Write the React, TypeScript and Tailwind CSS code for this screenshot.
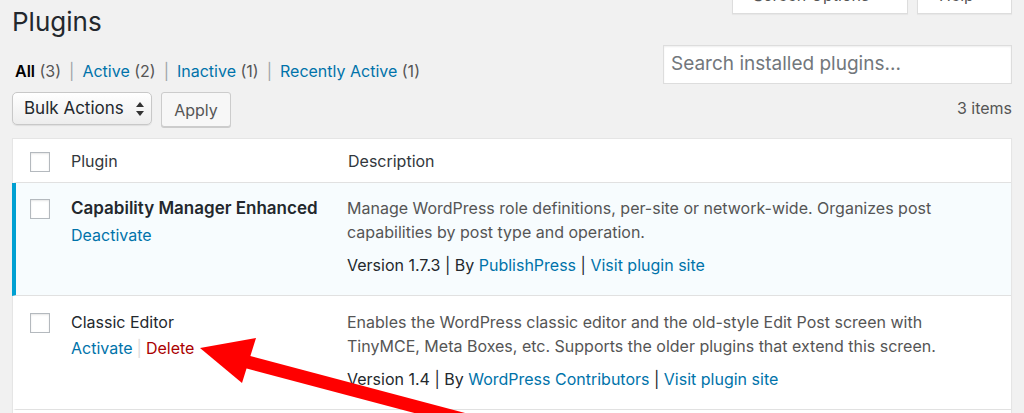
function Checkbox() {
  return (
    <span className="block h-[20px] w-[20px] border border-[#b4b9be] bg-white shadow-[inset_0_1px_2px_rgba(0,0,0,0.1)]" />
  );
}

function Sep() {
  return <span className="mx-[8px] text-[#a0a5aa]">|</span>;
}

function RedArrow() {
  // Hand-drawn style pointer aimed at the Delete action
  return (
    <svg
      className="pointer-events-none absolute left-0 top-0"
      width="1024"
      height="413"
      viewBox="0 0 1024 413"
    >
      <line x1="240" y1="360" x2="500" y2="429" stroke="#ff0000" strokeWidth="13" />
      <polygon points="200,348 256,338 242,383" fill="#ff0000" />
    </svg>
  );
}

export default function App() {
  return (
    <div className="relative h-[413px] w-[1024px] overflow-hidden bg-[#f1f1f1] font-['Inter',sans-serif] text-[#23282d]">
      <div className="px-[12px]">
        {/* heading + screen meta tabs */}
        <div className="flex items-start justify-between">
          <h1 className="mt-[4px] text-[26px] leading-[36px] font-normal text-[#23282d]">Plugins</h1>
          <div className="-mt-[26px] flex gap-[9px]">
            <div className="flex h-[40px] w-[176px] items-end border border-t-0 border-[#ddd] bg-white pb-[8px] pl-[20px] text-[16px] leading-[20px] text-[#555] shadow-[0_1px_1px_rgba(0,0,0,0.04)]">
              Screen Options
            </div>
            <div className="flex h-[40px] w-[95px] items-end border border-t-0 border-[#ddd] bg-white pb-[8px] pl-[21px] text-[16px] leading-[20px] text-[#555] shadow-[0_1px_1px_rgba(0,0,0,0.04)]">
              Help
            </div>
          </div>
        </div>

        {/* view filters + search */}
        <div className="mt-[5px] flex items-start justify-between">
          <ul className="ml-[3px] mt-[14px] flex text-[16px] leading-[24px] text-[#555]">
            <li>
              <span className="font-semibold text-black">All</span> (3)
            </li>
            <Sep />
            <li>
              <span className="text-[#0073aa]">Active</span> (2)
            </li>
            <Sep />
            <li>
              <span className="text-[#0073aa]">Inactive</span> (1)
            </li>
            <Sep />
            <li>
              <span className="text-[#0073aa]">Recently Active</span> (1)
            </li>
          </ul>
          <div className="flex h-[39px] w-[349px] items-center border border-[#ddd] bg-white pl-[7px] text-[19px] text-[#72777c] shadow-[inset_0_1px_2px_rgba(0,0,0,0.07)]">
            Search installed plugins...
          </div>
        </div>

        {/* bulk actions row */}
        <div className="mt-[8px] flex items-start justify-between">
          <div className="flex items-start gap-[9px]">
            <div className="flex h-[33px] w-[140px] items-center justify-between rounded-[5px] border border-[#c8c8c8] bg-gradient-to-b from-white to-[#ededed] pl-[11px] pr-[7px] text-[17px] text-[#23282d] shadow-[0_1px_1px_rgba(0,0,0,0.08)]">
              <span>Bulk Actions</span>
              <svg width="8" height="14" viewBox="0 0 8 14">
                <polygon points="4,0 8,5 0,5" fill="#333" />
                <polygon points="0,9 8,9 4,14" fill="#333" />
              </svg>
            </div>
            <div className="flex h-[35px] w-[70px] items-center justify-center rounded-[3px] border border-[#ccc] bg-[#f7f7f7] text-[16px] text-[#555] shadow-[0_1px_0_#ccc]">
              Apply
            </div>
          </div>
          <div className="mt-[5px] text-[16px] leading-[22px] text-[#555]">3 items</div>
        </div>

        {/* plugin table */}
        <div className="mt-[11px] border border-b-0 border-[#e5e5e5] bg-white shadow-[0_1px_1px_rgba(0,0,0,0.04)]">
          {/* header */}
          <div className="flex h-[44px] border-b border-l-[3px] border-b-[#e1e1e1] border-l-transparent text-[16px] leading-[24px] text-[#32373c]">
            <div className="w-[55px] pl-[14px] pt-[13px]">
              <Checkbox />
            </div>
            <div className="w-[276px] pt-[10px]">Plugin</div>
            <div className="flex-1 pt-[10px] pl-px">Description</div>
          </div>

          {/* active plugin */}
          <div className="-ml-px flex h-[113px] border-b border-l-4 border-b-[#e1e1e1] border-l-[#00a0d2] bg-[#f7fcfe] text-[16px] leading-[24px]">
            <div className="w-[55px] pl-[14px] pt-[16px]">
              <Checkbox />
            </div>
            <div className="w-[276px] pt-[13px]">
              <div className="text-[17px] font-semibold text-[#23282d]">Capability Manager Enhanced</div>
              <div className="mt-[3px] text-[#0073aa]">Deactivate</div>
            </div>
            <div className="flex-1 pt-[13px]">
              <p className="text-[#555]">
                <span className="block whitespace-nowrap">
                  Manage WordPress role definitions, per-site or network-wide. Organizes post
                </span>
                <span className="block whitespace-nowrap">capabilities by post type and operation.</span>
              </p>
              <p className="mt-[9px] text-[#23282d]">
                Version 1.7.3 | By <span className="text-[#0073aa]">PublishPress</span> |{" "}
                <span className="text-[#0073aa]">Visit plugin site</span>
              </p>
            </div>
          </div>

          {/* inactive plugin */}
          <div className="flex h-[114px] border-b border-l-[3px] border-b-[#e1e1e1] border-l-transparent text-[16px] leading-[24px]">
            <div className="w-[55px] pl-[14px] pt-[17px]">
              <Checkbox />
            </div>
            <div className="w-[276px] pt-[14px]">
              <div className="text-[#23282d]">Classic Editor</div>
              <div className="mt-[2px] flex text-[#0073aa]">
                <span>Activate</span>
                <span className="mx-[4px] text-[#ddd]">|</span>
                <span className="text-[#a00]">Delete</span>
              </div>
            </div>
            <div className="flex-1 pt-[14px]">
              <p className="text-[#555]">
                <span className="block whitespace-nowrap">
                  Enables the WordPress classic editor and the old-style Edit Post screen with
                </span>
                <span className="block whitespace-nowrap">
                  TinyMCE, Meta Boxes, etc. Supports the older plugins that extend this screen.
                </span>
              </p>
              <p className="mt-[9px] text-[#23282d]">
                Version 1.4 | By <span className="text-[#0073aa]">WordPress Contributors</span> |{" "}
                <span className="text-[#0073aa]">Visit plugin site</span>
              </p>
            </div>
          </div>
          <div className="h-[20px]" />
        </div>
      </div>
      <RedArrow />
    </div>
  );
}
